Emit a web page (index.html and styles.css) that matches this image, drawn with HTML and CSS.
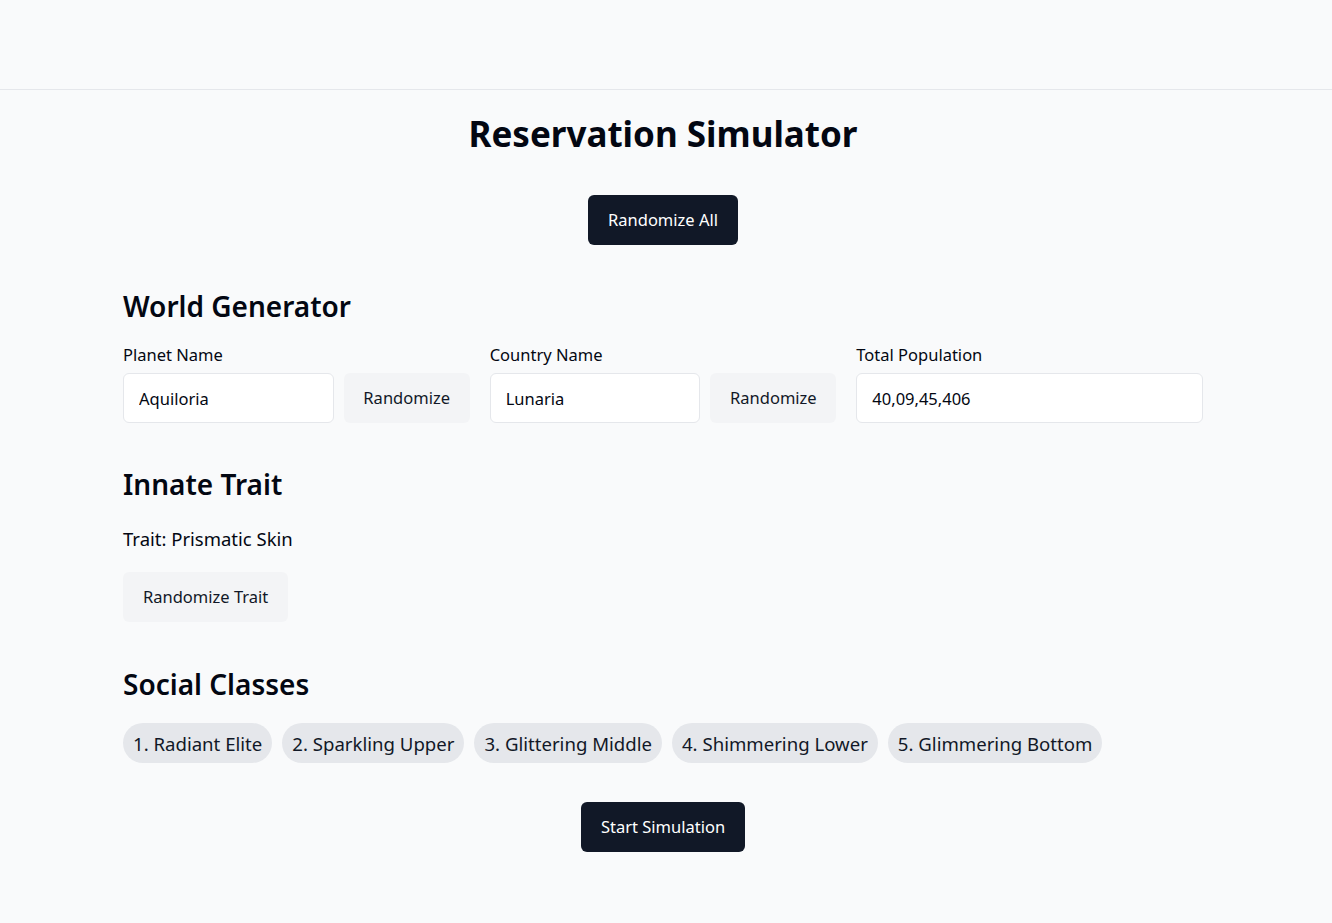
FILE: index.html
```html
<!DOCTYPE html>
<html lang="en">
<head>
<meta charset="utf-8">
<title>Reservation Simulator</title>
<link rel="stylesheet" href="styles.css">
</head>
<body>
<header class="topbar"></header>
<main class="page">
  <h1 class="title">Reservation Simulator</h1>
  <div class="center-row">
    <button class="btn btn-dark">Randomize All</button>
  </div>

  <section class="section section-world">
    <h2 class="section-title">World Generator</h2>
    <div class="field-grid">
      <div class="field">
        <label class="label">Planet Name</label>
        <div class="field-row">
          <input class="input" type="text" value="Aquiloria">
          <button class="btn btn-light">Randomize</button>
        </div>
      </div>
      <div class="field">
        <label class="label">Country Name</label>
        <div class="field-row">
          <input class="input" type="text" value="Lunaria">
          <button class="btn btn-light">Randomize</button>
        </div>
      </div>
      <div class="field">
        <label class="label">Total Population</label>
        <div class="field-row">
          <input class="input" type="text" value="40,09,45,406">
        </div>
      </div>
    </div>
  </section>

  <section class="section section-trait">
    <h2 class="section-title">Innate Trait</h2>
    <p class="trait-text">Trait: Prismatic Skin</p>
    <button class="btn btn-light">Randomize Trait</button>
  </section>

  <section class="section section-classes">
    <h2 class="section-title">Social Classes</h2>
    <div class="chips">
      <span class="chip">1. Radiant Elite</span>
      <span class="chip">2. Sparkling Upper</span>
      <span class="chip">3. Glittering Middle</span>
      <span class="chip">4. Shimmering Lower</span>
      <span class="chip">5. Glimmering Bottom</span>
    </div>
  </section>

  <div class="center-row start-row">
    <button class="btn btn-dark">Start Simulation</button>
  </div>
</main>
</body>
</html>
```

FILE: styles.css
```css
* { box-sizing: border-box; }

html, body {
  margin: 0;
  padding: 0;
  background: #f9fafb;
  color: #030712;
  font-family: "Noto Sans", "Open Sans", sans-serif;
}

body {
  padding-right: 6px;
}

.topbar {
  height: 90px;
  border-bottom: 1px solid #e5e7eb;
  margin-right: -6px;
}

.page {
  max-width: 1080px;
  margin: 0 auto;
}

.title {
  margin: 24px 0 0;
  font-size: 35px;
  line-height: 40px;
  font-weight: 700;
  text-align: center;
  color: #030712;
}

.center-row {
  display: flex;
  justify-content: center;
  margin-top: 41px;
}

.btn {
  font-family: inherit;
  font-size: 16.5px;
  line-height: 24px;
  height: 50px;
  padding: 0 20px;
  border: none;
  border-radius: 6px;
  cursor: pointer;
}

.btn-dark {
  background: #111827;
  color: #ffffff;
}

.btn-light {
  background: #f3f4f6;
  color: #111827;
}

.section-title {
  margin: 0;
  font-size: 28px;
  line-height: 36px;
  font-weight: 600;
  color: #030712;
}

.section-world { margin-top: 43px; }

.field-grid {
  display: grid;
  grid-template-columns: repeat(3, minmax(0, 1fr));
  gap: 20px;
  margin-top: 17px;
}

.field {
  display: flex;
  flex-direction: column;
  min-width: 0;
}

.label {
  font-size: 16.5px;
  line-height: 28px;
  margin-bottom: 4px;
}

.field-row {
  display: flex;
  gap: 10px;
  align-items: center;
}

.input {
  flex: 1 1 0;
  width: 0;
  min-width: 0;
  height: 50px;
  padding: 0 15px;
  font-family: inherit;
  font-size: 16.5px;
  color: #030712;
  background: #ffffff;
  border: 1px solid #e5e7eb;
  border-radius: 6px;
  outline: none;
}

.field-row .btn { flex: none; width: 126px; padding: 0; }

.section-trait { margin-top: 43px; }

.trait-text {
  margin: 23px 0 19px;
  font-size: 18.5px;
  line-height: 28px;
}

.section-classes { margin-top: 44px; }

.chips {
  display: flex;
  flex-wrap: wrap;
  gap: 10px;
  margin-top: 21px;
}

.chip {
  display: inline-flex;
  align-items: center;
  height: 40px;
  padding: 0 10px;
  border-radius: 999px;
  background: #e5e7eb;
  font-size: 18.6px;
  color: #111827;
}

.start-row { margin-top: 39px; }
```
